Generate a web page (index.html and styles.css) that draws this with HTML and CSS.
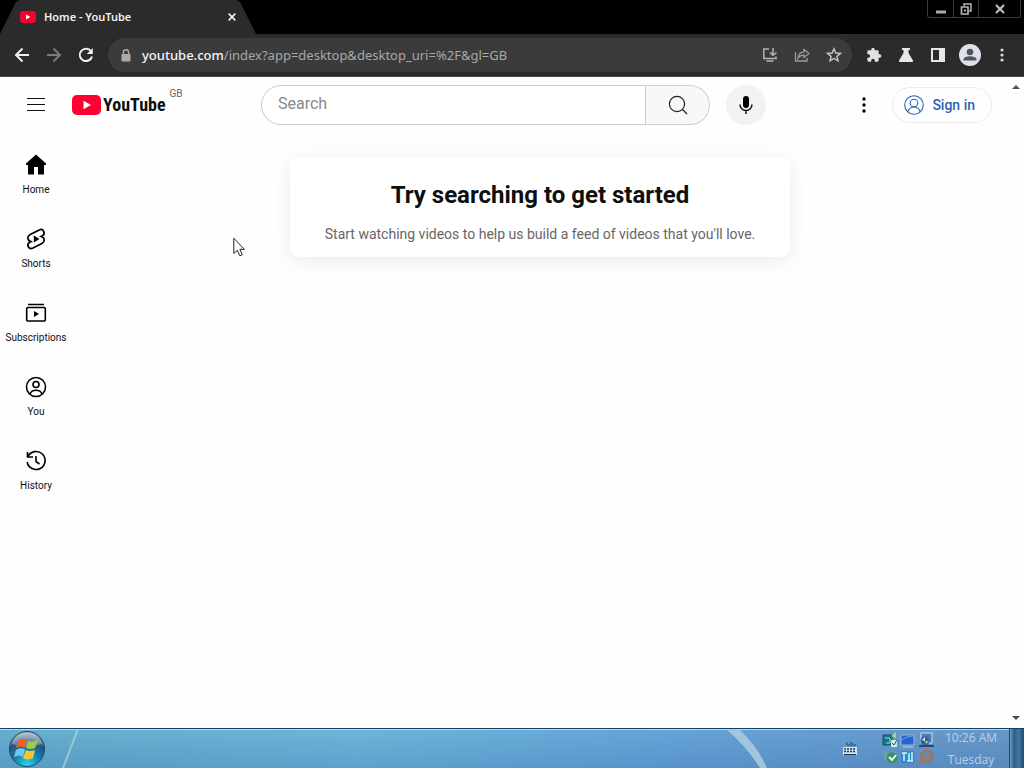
FILE: index.html
```html
<!DOCTYPE html>
<html lang="en-GB">
<head>
<meta charset="utf-8">
<meta name="viewport" content="width=device-width, initial-scale=1">
<title>Home - YouTube</title>
<link rel="stylesheet" href="styles.css">
</head>
<body>
<div class="tabstrip">
  <div class="tab">
    <svg class="tab-bg" viewBox="0 0 258 34" preserveAspectRatio="none" aria-hidden="true"><path d="M0 34L15 4Q17 0 21 0H235Q239 0 241 4L256 34Z" fill="#2b2b2b"/></svg>
    <svg width="16" height="12" viewBox="0 0 16 12" aria-hidden="true"><rect width="16" height="12" rx="3" fill="#f4002f"/><path d="M6 3.5L10.5 6L6 8.5Z" fill="#fff"/></svg>
    <span class="tab-title">Home - YouTube</span>
    <button class="tab-close" aria-label="Close tab"><svg width="8" height="8" viewBox="0 0 8 8"><path d="M.7.7L7.3 7.3M7.3.7L.7 7.3" stroke="#eee" stroke-width="1.7"/></svg></button>
  </div>
  <div class="window-controls">
    <button class="win-btn" aria-label="Minimise"><svg width="12" height="12" viewBox="0 0 12 12"><path d="M1 9H11" stroke="#aaa" stroke-width="3"/></svg></button>
    <button class="win-btn" aria-label="Restore"><svg width="12" height="12" viewBox="0 0 12 12" fill="none" stroke="#b5b5b5"><path d="M4 3V1H11V8H9" stroke-width="1.5"/><path d="M1.5 4H8V11H1.5Z" stroke-width="1.7"/><path d="M4 7.5H6" stroke-width="2"/></svg></button>
    <button class="win-btn win-close" aria-label="Close"><svg width="10" height="10" viewBox="0 0 10 10"><path d="M1 1L9 9M9 1L1 9" stroke="#c4c4c4" stroke-width="2"/></svg></button>
  </div>
</div>

<div class="toolbar">
  <button class="tool" aria-label="Back"><svg width="16" height="16" viewBox="0 0 16 16"><path d="M15 8H2M8.5 1.5L2 8L8.5 14.5" fill="none" stroke="#eee" stroke-width="2"/></svg></button>
  <button class="tool" aria-label="Forward"><svg width="16" height="16" viewBox="0 0 16 16"><path d="M1 8H14M7.5 1.5L14 8L7.5 14.5" fill="none" stroke="#7c7c7c" stroke-width="1.8"/></svg></button>
  <button class="tool" aria-label="Reload"><svg width="16" height="16" viewBox="0 0 16 16"><path d="M13 4.2A6.2 6.2 0 1 0 14 9.4" fill="none" stroke="#eee" stroke-width="2"/><path d="M14.8 1V7H8.8Z" fill="#eee"/></svg></button>
  <div class="omnibox">
    <svg width="10" height="13" viewBox="0 0 10 13" aria-hidden="true"><path d="M2.4 6V3.4A2.6 2.6 0 0 1 7.6 3.4V6" fill="none" stroke="#aaa" stroke-width="1.4"/><rect x=".5" y="5" width="9" height="7.5" rx="1" fill="#aaa"/></svg>
    <div class="url"><span class="url-host">youtube.com</span>/index?app=desktop&amp;desktop_uri=%2F&amp;gl=GB</div>
    <button class="tool" aria-label="Install"><svg width="16" height="16" viewBox="0 0 16 16" fill="none" stroke="#b4b4b4" stroke-width="1.5"><path d="M7 2H1.8V11.5H14V9.5M4.5 14H11.5M11 1V8M8 5.5L11 8.3L14.5 5.5"/></svg></button>
    <button class="tool" aria-label="Share"><svg width="16" height="16" viewBox="0 0 16 16" fill="none" stroke="#9c9c9c" stroke-width="1.3"><path d="M1.5 5V14H13V11M10 2.5L15 6.5L10 10.5V8.2C7 8.2 5.5 9 4 11C4.5 7.3 6.5 5 10 4.8Z"/></svg></button>
    <button class="tool" aria-label="Bookmark"><svg width="16" height="16" viewBox="0 0 16 16"><path d="M8 1.8L9.8 6L14.4 6.4L10.9 9.4L12 13.9L8 11.5L4 13.9L5.1 9.4L1.6 6.4L6.2 6Z" fill="none" stroke="#c8c8c8" stroke-width="1.4"/></svg></button>
  </div>
  <button class="tool" aria-label="Extensions"><svg width="16" height="16" viewBox="0 0 24 24"><path fill="#e2e2e2" d="M20.5 11H19V7a2 2 0 0 0-2-2h-4V3.500a2.500 2.500 0 0 0-5 0V5H4a2 2 0 0 0-2 2v3.800h1.500a2.700 2.700 0 0 1 0 5.400H2V20a2 2 0 0 0 2 2h3.800v-1.500a2.700 2.700 0 0 1 5.400 0V22H17a2 2 0 0 0 2-2v-4h1.500a2.500 2.500 0 0 0 0-5z"/></svg></button>
  <button class="tool" aria-label="Experiments"><svg width="16" height="16" viewBox="0 0 16 16"><path d="M4 1H12V3H10.500V6L15 13.500Q15.500 15 14 15H2Q.5 15 1 13.500L5.500 6V3H4Z" fill="#e8e8e8"/></svg></button>
  <button class="tool" aria-label="Side panel"><svg width="16" height="16" viewBox="0 0 16 16"><path d="M1 1H15V15H1ZM3 3V13H9V3Z" fill="#e8e8e8" fill-rule="evenodd"/></svg></button>
  <button class="tool tool-profile" aria-label="Profile"><svg width="22" height="22" viewBox="0 0 22 22"><circle cx="11" cy="11" r="11" fill="#dfe1ea"/><circle cx="11" cy="8" r="3.300" fill="#4f5260"/><path d="M4.500 16.500V15.500C4.500 13.500 8 12.300 11 12.300S17.500 13.500 17.500 15.500V16.500Z" fill="#4f5260"/></svg></button>
  <button class="tool" aria-label="Chrome menu"><svg width="16" height="16" viewBox="0 0 16 16" fill="#d8d8d8"><circle cx="8" cy="3" r="1.600"/><circle cx="8" cy="8" r="1.600"/><circle cx="8" cy="13" r="1.600"/></svg></button>
</div>

<div class="viewport">
  <div class="page">
    <header class="masthead">
      <div class="brand">
        <button class="icon-btn" aria-label="Guide"><svg width="18" height="14" viewBox="0 0 18 14"><path d="M0 .5H18M0 6.500H18M0 12.500H18" stroke="#111" stroke-width="1"/></svg></button>
        <a class="logo" href="#" aria-label="YouTube home">
          <svg width="29" height="20" viewBox="0 0 29 20" aria-hidden="true"><rect width="29" height="20" rx="5" fill="#ff0033"/><path d="M11.500 5.700L19 10L11.500 14.300Z" fill="#fff"/></svg>
          <span class="wordmark">YouTube</span>
        </a>
        <span class="region">GB</span>
      </div>
      <form class="search">
        <input class="search-input" type="text" placeholder="Search" aria-label="Search">
        <button class="search-btn" type="button" aria-label="Search"><svg width="20" height="20" viewBox="0 0 20 20" fill="none" stroke="#222" stroke-width="1.200"><circle cx="9" cy="9" r="7.600"/><path d="M14.500 14.500L19 19"/></svg></button>
        <button class="mic-btn" type="button" aria-label="Search with your voice"><svg width="16" height="20" viewBox="0 0 16 20"><rect x="5" y="1" width="6" height="12" rx="3" fill="#000"/><path d="M2 9.500A6 6 0 0 0 14 9.500M8 15.500V19" fill="none" stroke="#111" stroke-width="1.500"/></svg></button>
      </form>
      <div class="account">
        <button class="icon-btn" aria-label="Settings"><svg width="4" height="16" viewBox="0 0 4 16"><circle cx="2" cy="2" r="1.700"/><circle cx="2" cy="8" r="1.700"/><circle cx="2" cy="14" r="1.700"/></svg></button>
        <a class="signin" href="#"><svg width="20" height="20" viewBox="0 0 20 20" fill="none" stroke="#2a62b5" stroke-width="1.100" aria-hidden="true"><circle cx="10" cy="10" r="9.300"/><circle cx="10" cy="8" r="3.800"/><path d="M3.800 16.700C5 13.500 7.500 12 10 12S15 13.500 16.200 16.700"/></svg>Sign in</a>
      </div>
    </header>
    <div class="columns">
      <nav class="guide">
        <a class="guide-item" href="#"><svg width="24" height="24" viewBox="0 0 24 24"><path d="M12 1.500L22 10.500V12H20V21.500H14V14H10V21.500H4V12H2V10.500Z"/></svg>Home</a>
        <a class="guide-item" href="#"><svg width="24" height="24" viewBox="0 0 24 24"><path d="M15.300 2.900L6.200 7.600C2.700 9.500 3.100 13 6.300 14.200L7 14.500L5.700 15.200C1.900 17.500 4.800 23 8.900 21.100L17.900 16.400C21.300 14.500 20.900 11 17.700 9.800L17 9.500L18.300 8.800C22.100 6.500 19.200 1 15.300 2.900Z" fill="none" stroke="#000" stroke-width="1.700"/><path d="M9.800 8.500L15.500 12L9.800 15.500Z"/></svg>Shorts</a>
        <a class="guide-item" href="#"><svg width="24" height="24" viewBox="0 0 24 24"><path d="M4 3.500H20" stroke="#000" stroke-width="1.500"/><rect x="2.700" y="6.500" width="18.600" height="13.500" rx="1" fill="none" stroke="#000" stroke-width="1.600"/><path d="M10 10L15 13L10 16Z"/></svg>Subscriptions</a>
        <a class="guide-item" href="#"><svg width="24" height="24" viewBox="0 0 24 24" fill="none" stroke="#000" stroke-width="1.600"><circle cx="12" cy="12" r="9.500"/><circle cx="12" cy="9.500" r="3"/><path d="M6 19C7 16.300 9 15.200 12 15.200S17 16.300 18 19"/></svg>You</a>
        <a class="guide-item" href="#"><svg width="24" height="24" viewBox="0 0 24 24" fill="none" stroke="#000" stroke-width="1.600"><path d="M4 7.500A9 9 0 1 1 3.200 13M3.500 3V8H9M12 7V12.500L15.500 15"/></svg>History</a>
      </nav>
      <main class="feed">
        <section class="nudge">
          <h1 class="nudge-title">Try searching to get started</h1>
          <p class="nudge-text">Start watching videos to help us build a feed of videos that you'll love.</p>
        </section>
      </main>
    </div>
  </div>
  <div class="scroller" aria-hidden="true">
    <svg width="8" height="4" viewBox="0 0 8 4"><path d="M0 4L4 0L8 4Z" fill="#505050"/></svg>
    <svg width="8" height="4" viewBox="0 0 8 4"><path d="M0 0L4 4L8 0Z" fill="#505050"/></svg>
  </div>
</div>

<footer class="taskbar">
  <svg class="streaks" viewBox="0 0 1024 39" preserveAspectRatio="none" aria-hidden="true">
    <path d="M78 0L63 39" stroke="#a5d3d9" stroke-width="2" opacity=".8"/>
    <path d="M726 0H739Q758 18 767 39H760Q747 18 726 0Z" fill="#aecde0" opacity=".85"/>
  </svg>
  <button class="start" aria-label="Start">
    <svg width="38" height="38" viewBox="0 0 38 38">
      <defs><radialGradient id="orb" cx=".5" cy=".95" r=".9"><stop offset="0" stop-color="#25d5f2"/><stop offset=".45" stop-color="#127eae"/><stop offset=".75" stop-color="#29517b"/><stop offset="1" stop-color="#8daabb"/></radialGradient></defs>
      <circle cx="19" cy="19" r="17.500" fill="url(#orb)" stroke="#204967" stroke-width="1"/>
      <path d="M4 14A15.500 15.500 0 0 1 34 14Q19 19 4 14Z" fill="#fff" opacity=".3"/>
      <path d="M10 11Q14 7 19 10L17 18Q13 15 8 18Z" fill="#ec6425"/>
      <path d="M20 11Q25 13 30 10L27 18Q23 20 18 18Z" fill="#9dcc48"/>
      <path d="M8 20Q12 17 17 19.500L15 27Q11 24 6 27Z" fill="#74c7f0"/>
      <path d="M18 20Q22 22 27 20L25 28Q20 31 15 28Z" fill="#fbc52f"/>
    </svg>
  </button>
  <div class="status">
    <button class="keyboard" aria-label="Keyboard layout"><svg width="16" height="16" viewBox="0 0 16 16"><path d="M5 1V4H14M8 2H11" fill="none" stroke="#254d70"/><rect x="1" y="6" width="14" height="8" fill="#d5e4ef"/><path d="M2 8H14M2 10.500H14" stroke="#153b5b" stroke-width="1.500" stroke-dasharray="2 1"/><path d="M2 13.500H14" stroke="#153b5b"/></svg></button>
    <div class="tray">
      <svg width="16" height="16" viewBox="0 0 16 16"><rect x="1" y="3" width="9" height="10" fill="#147684" stroke="#164f75"/><path d="M3 6H8V11H4" stroke="#8de2dc" fill="none"/><path d="M9 4L14 0V6Z" fill="#9bdb75"/><rect x="9" y="8" width="6" height="7" fill="#d3e6e8"/><path d="M10 11L12 13L15 8" stroke="#176552" fill="none"/></svg>
      <svg width="16" height="16" viewBox="0 0 16 16"><rect x="1" y="3" width="13" height="10" fill="#2864cf" stroke="#9bb7df"/><path d="M2 8Q8 3 14 4" stroke="#6fa1eb" fill="none"/><path d="M3 15H13" stroke="#c7d6e9"/></svg>
      <svg width="16" height="16" viewBox="0 0 16 16"><rect x="3" y="1" width="11" height="10" fill="#527bb0" stroke="#d3deec"/><path d="M1 13H16V15H1Z" fill="#244674"/><circle cx="7" cy="9" r="4.500" fill="#37619a"/><path d="M4 8L7 5V9Z" fill="#e1e8ef"/><path d="M7 9H11L8 12Z" fill="#b1ce53"/></svg>
      <svg width="16" height="16" viewBox="0 0 16 16"><path d="M1 3H5V6Q8 8 5 12L2 10Z" fill="#7899a9"/><circle cx="10" cy="9" r="5.500" fill="#369361"/><path d="M7 8L10 11L14 6" stroke="#f1f7ed" stroke-width="2" fill="none"/></svg>
      <svg width="16" height="16" viewBox="0 0 16 16"><rect x="1" y="2" width="13" height="12" fill="#288ec9"/><path d="M2 4H7M4 4V12M7 12H13M9 4V12M12 3V12" stroke="#d7effa" stroke-width="1.500"/></svg>
      <svg width="16" height="16" viewBox="0 0 16 16" fill="none" stroke="#b56d40"><circle cx="9" cy="7" r="5.500" stroke-width="2"/><circle cx="9" cy="7" r="2.500"/><path d="M5 11L1 14L6 13" stroke-width="2"/></svg>
    </div>
    <div class="clock"><time>10:26 AM</time><span>Tuesday</span></div>
    <button class="show-desktop" aria-label="Show desktop"></button>
  </div>
</footer>

<svg class="cursor" width="12" height="20" viewBox="0 0 12 20" aria-hidden="true"><path d="M.8 1.200V16.500L4.300 13.300L6.800 18.800L9.300 17.700L6.900 12.300H11.400Z" fill="#fff" stroke="#222" stroke-width="1"/></svg>
</body>
</html>
```

FILE: styles.css
```css
* { box-sizing: border-box; }
body {
  margin: 0;
  min-height: 100vh;
  display: flex;
  flex-direction: column;
  position: relative;
  background: #fefefe;
  color: #0f0f0f;
  font-family: Roboto, "Liberation Sans", sans-serif;
}
button {
  border: 0;
  padding: 0;
  background: none;
  color: inherit;
  font: inherit;
  display: flex;
  align-items: center;
  justify-content: center;
}
a { color: inherit; text-decoration: none; }
svg { display: block; flex: none; }

.tabstrip {
  height: 34px;
  display: flex;
  justify-content: space-between;
  align-items: flex-start;
  background: #000;
}
.tab {
  position: relative;
  width: 258px;
  height: 34px;
  padding: 0 20px;
  display: flex;
  align-items: center;
  gap: 8px;
  color: #f1f1f1;
  font: 600 11px/16px "Noto Sans", "Open Sans", sans-serif;
}
.tab > * { position: relative; }
.tab .tab-bg { position: absolute; inset: 0; width: 100%; height: 100%; }
.tab-title { flex: 1; }
.tab-close { width: 16px; height: 16px; margin-right: -2px; }
.window-controls {
  display: flex;
  margin-right: 3px;
  border: 1px solid #3a3a3a;
  border-top: 0;
  border-radius: 0 0 3px 3px;
}
.win-btn { width: 25px; height: 17px; }
.win-btn + .win-btn { border-left: 1px solid #3a3a3a; }
.win-btn.win-close { width: 42px; }

.toolbar {
  height: 43px;
  padding: 0 10px;
  display: flex;
  align-items: center;
  gap: 8px;
  background: #2b2b2b;
  border-bottom: 1px solid #454545;
}
.tool { width: 24px; height: 24px; flex: none; }
.omnibox {
  flex: 1;
  min-width: 0;
  height: 34px;
  margin: 0 2px;
  padding: 0 6px 0 13px;
  display: flex;
  align-items: center;
  gap: 8px;
  border-radius: 17px;
  background: #3b3b3b;
}
.url {
  flex: 1;
  min-width: 0;
  padding-left: 3px;
  overflow: hidden;
  white-space: nowrap;
  color: #a8a8a8;
  font: 13px/20px "Noto Sans", "Open Sans", sans-serif;
}
.url-host { color: #f5f5f5; font-weight: 500; }

.viewport { flex: 1; display: flex; }
.page { flex: 1; min-width: 0; }
.scroller {
  width: 16px;
  padding: 8px 0;
  display: flex;
  flex-direction: column;
  align-items: center;
  justify-content: space-between;
}
.masthead {
  height: 56px;
  padding: 0 16px;
  display: flex;
  align-items: center;
  gap: 78px;
}
.brand { display: flex; align-items: center; width: 167px; flex: none; }
.icon-btn { width: 40px; height: 40px; flex: none; }
.logo { display: flex; align-items: center; gap: 2px; margin-left: 16px; }
.wordmark { font: bold 18px/24px "Roboto Condensed", Roboto, sans-serif; }
.region { margin-left: 4px; align-self: flex-start; font-size: 10px; line-height: 12px; color: #666; padding-top: 3px; }
.search { flex: 1; min-width: 0; display: flex; }
.search-input {
  flex: 1;
  min-width: 0;
  height: 40px;
  padding: 0 16px 4px;
  border: 1px solid #ccc;
  border-radius: 20px 0 0 20px;
  background: #fff;
  font: 16px/24px Roboto, sans-serif;
}
.search-input::placeholder { color: #888; opacity: 1; }
.search-btn {
  width: 64px;
  height: 40px;
  border: 1px solid #d0d0d0;
  border-left: 0;
  border-radius: 0 20px 20px 0;
  background: #f8f8f8;
}
.mic-btn { width: 40px; height: 40px; margin-left: 16px; border-radius: 20px; background: #f2f2f2; }
.account { display: flex; align-items: center; gap: 8px; flex: none; }
.signin {
  height: 36px;
  padding: 0 16px 0 11px;
  display: flex;
  align-items: center;
  gap: 8px;
  border: 1px solid #ececec;
  border-radius: 18px;
  color: #2a62b5;
  font-size: 14px;
  font-weight: 500;
}

.columns { display: flex; }
.guide { width: 72px; padding-top: 4px; flex: none; }
.guide-item {
  height: 74px;
  padding-top: 16px;
  display: flex;
  flex-direction: column;
  align-items: center;
  gap: 6px;
  font-size: 10px;
  line-height: 14px;
}
.feed { flex: 1; padding: 24px 16px; }
.nudge {
  max-width: 500px;
  margin: 0 auto;
  padding: 22px 24px 13px;
  border-radius: 10px;
  background: #fff;
  box-shadow: 0 4px 20px rgba(0, 0, 0, 0.08);
  text-align: center;
}
.nudge-title { margin: 0 0 13px; font-size: 24px; line-height: 32px; font-weight: 700; }
.nudge-text { margin: 0; font-size: 14px; line-height: 20px; color: #666; }

.taskbar {
  position: relative;
  height: 40px;
  display: flex;
  align-items: center;
  justify-content: space-between;
  border-top: 1px solid #173f60;
  background: linear-gradient(#fff0, #174f9030), linear-gradient(90deg, #66aecd, #6db5da 35%, #66a4d8 65%, #6896c8);
  box-shadow: inset 0 1px #b2dcf2;
}
.taskbar > * { position: relative; }
.taskbar .streaks { position: absolute; inset: 0; width: 100%; height: 100%; }
.start { width: 38px; height: 38px; margin-left: 8px; }
.status { display: flex; align-items: center; align-self: stretch; }
.keyboard { width: 16px; margin-right: 24px; }
.tray { display: grid; grid-template-columns: repeat(3, 16px); gap: 1px 2px; margin-right: 10px; }
.clock {
  width: 54px;
  margin-right: 11px;
  display: flex;
  flex-direction: column;
  align-items: center;
  gap: 6px;
  color: #b8d0e8;
  white-space: nowrap;
  font: 12px/16px "Open Sans", "Noto Sans", sans-serif;
}
.show-desktop {
  width: 15px;
  align-self: stretch;
  border-left: 1px solid #23496c;
  background: linear-gradient(90deg, #6f9dbf, #2d5e88 30%, #46789f 60%, #1d4c76);
}
.cursor { position: absolute; left: 233px; top: 237px; }
```
